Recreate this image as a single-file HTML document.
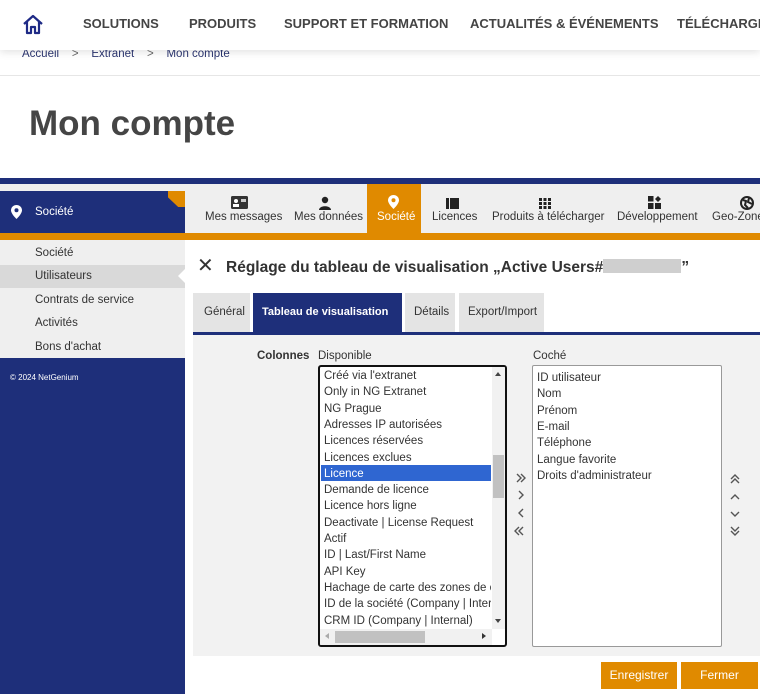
<!DOCTYPE html>
<html><head><meta charset="utf-8"><style>
*{margin:0;padding:0;box-sizing:border-box}
html,body{width:760px;height:694px;overflow:hidden}
body{background:#fff;font-family:"Liberation Sans","DejaVu Sans",sans-serif;position:relative;color:#333}
.a{position:absolute;white-space:nowrap}
.nav{font-size:13px;font-weight:bold;color:#444;top:16px}
.t{font-size:11.5px;color:#333}
.li{position:absolute;left:4px;font-size:11.5px;color:#333;height:16.3px;line-height:16px;white-space:nowrap}
#wrap{position:absolute;left:0;top:0;width:760px;height:694px;overflow:hidden}
</style></head><body><div id="wrap">
<div class="a" style="left:0;top:0;width:760px;height:50px;background:#fff;box-shadow:0 2px 8px rgba(0,0,0,.12);z-index:2"></div>
<svg class="a" style="left:22px;top:13px;z-index:3" width="22" height="22" viewBox="0 0 22 22"><path d="M2 11 L11 3 L20 11 M5 9 V20 H9 V14 H13 V20 H17 V9" fill="none" stroke="#1e2a86" stroke-width="2.2" stroke-linejoin="round"/></svg>
<div class="a nav" style="left:83px;z-index:3">SOLUTIONS</div>
<div class="a nav" style="left:189px;z-index:3">PRODUITS</div>
<div class="a nav" style="left:284px;z-index:3">SUPPORT ET FORMATION</div>
<div class="a nav" style="left:470px;z-index:3">ACTUALITÉS &amp; ÉVÉNEMENTS</div>
<div class="a nav" style="left:677px;z-index:3">TÉLÉCHARGEMENTS</div>
<div class="a" style="left:22px;top:48px;font-size:11.5px;color:#2b3570">Accueil &nbsp;&nbsp; <span style="color:#666">&gt;</span> &nbsp;&nbsp; Extranet &nbsp;&nbsp; <span style="color:#666">&gt;</span> &nbsp;&nbsp; Mon compte</div>
<div class="a" style="left:0;top:75px;width:760px;height:1px;background:#e6e6e6"></div>
<div class="a" style="left:29px;top:104px;font-size:35px;font-weight:bold;color:#454545">Mon compte</div>

<div class="a" style="left:0;top:178px;width:760px;height:6px;background:#1e2f7a"></div>
<div class="a" style="left:0;top:184px;width:760px;height:49px;background:#efefef"></div>
<div class="a" style="left:0;top:191px;width:185px;height:42px;background:#1e2f7a"></div>
<div class="a" style="left:168px;top:191px;width:17px;height:16px;background:#e08a00;clip-path:polygon(0 0,100% 0,100% 100%,60% 100%,0 40%)"></div>
<svg class="a" style="left:11px;top:205px" width="11" height="14" viewBox="0 0 11 14"><path d="M5.5 0C2.5 0 0 2.3 0 5.3 0 9 5.5 14 5.5 14S11 9 11 5.3C11 2.3 8.5 0 5.5 0z" fill="#fff"/><circle cx="5.5" cy="5.3" r="2" fill="#1e2f7a"/></svg>
<div class="a" style="left:35px;top:206px;font-size:11.5px;color:#fff">Société</div>
<div class="a" style="left:0;top:233px;width:760px;height:7px;background:#e08a00"></div>
<!-- top tabs -->
<svg class="a" style="left:231px;top:196px" width="17" height="13"><rect width="17" height="13" rx="1.5" fill="#333"/><circle cx="5" cy="5" r="2" fill="#fff"/><rect x="2" y="8" width="6" height="3" fill="#fff"/><rect x="10" y="3" width="5" height="3" fill="#ccc"/></svg>
<div class="a t" style="left:205px;top:211px">Mes messages</div>
<svg class="a" style="left:318px;top:196px" width="14" height="14"><circle cx="7" cy="4" r="3.2" fill="#222"/><path d="M1 14C1 9 13 9 13 14z" fill="#222"/></svg>
<div class="a t" style="left:294px;top:211px">Mes données</div>
<div class="a" style="left:367px;top:184px;width:54px;height:49px;background:#e08a00"></div>
<svg class="a" style="left:388px;top:195px" width="11" height="14" viewBox="0 0 11 14"><path d="M5.5 0C2.5 0 0 2.3 0 5.3 0 9 5.5 14 5.5 14S11 9 11 5.3C11 2.3 8.5 0 5.5 0z" fill="#fff"/><circle cx="5.5" cy="5.3" r="2" fill="#e08a00"/></svg>
<div class="a t" style="left:377px;top:211px;color:#fff">Société</div>
<svg class="a" style="left:446px;top:198px" width="13" height="11"><rect width="3" height="11" fill="#222"/><rect x="4" width="9" height="11" fill="#222"/></svg>
<div class="a t" style="left:432px;top:211px">Licences</div>
<svg class="a" style="left:539px;top:198px" width="12" height="11"><g fill="#222"><rect width="3" height="3"/><rect x="4.5" width="3" height="3"/><rect x="9" width="3" height="3"/><rect y="4" width="3" height="3"/><rect x="4.5" y="4" width="3" height="3"/><rect x="9" y="4" width="3" height="3"/><rect y="8" width="3" height="3"/><rect x="4.5" y="8" width="3" height="3"/><rect x="9" y="8" width="3" height="3"/></g></svg>
<div class="a t" style="left:492px;top:211px">Produits à télécharger</div>
<svg class="a" style="left:648px;top:196px" width="13" height="13"><g fill="#222"><rect width="5.5" height="5.5"/><rect y="7" width="5.5" height="6"/><rect x="7" y="7" width="6" height="6"/><path d="M10 0 13 3 10 6 7 3z"/></g></svg>
<div class="a t" style="left:617px;top:211px">Développement</div>
<svg class="a" style="left:740px;top:196px" width="14" height="14"><circle cx="7" cy="7" r="6" fill="none" stroke="#222" stroke-width="2"/><path d="M3 4 6 5 5 9 8 12M9 2 8 6 12 8" stroke="#222" stroke-width="2" fill="none"/></svg>
<div class="a t" style="left:712px;top:211px">Geo-Zone</div>

<!-- sidebar -->
<div class="a" style="left:0;top:240px;width:185px;height:118px;background:#efefef"></div>
<div class="a" style="left:0;top:265px;width:185px;height:23px;background:#d9d9d9"></div>
<div class="a" style="left:178px;top:269px;width:0;height:0;border-top:7px solid transparent;border-bottom:7px solid transparent;border-right:7px solid #fff"></div>
<div class="a t" style="left:35px;top:247px">Société</div>
<div class="a t" style="left:35px;top:270px">Utilisateurs</div>
<div class="a t" style="left:35px;top:294px">Contrats de service</div>
<div class="a t" style="left:35px;top:317px">Activités</div>
<div class="a t" style="left:35px;top:341px">Bons d'achat</div>
<div class="a" style="left:0;top:358px;width:185px;height:336px;background:#1e2f7a"></div>
<div class="a" style="left:10px;top:373px;font-size:8px;color:#fff">© 2024 NetGenium</div>

<!-- title -->
<div class="a" style="left:197px;top:256px;font-size:20px;color:#333;line-height:20px">✕</div>
<div class="a" style="left:226px;top:259px;font-size:15.5px;font-weight:bold;color:#333">Réglage du tableau de visualisation „Active Users#<span style="display:inline-block;width:78px;height:14px;background:#cfcfcf;vertical-align:-1px"></span>”</div>
<!-- tabs -->
<div class="a" style="left:193px;top:293px;width:57px;height:39px;background:#e4e4e4"></div>
<div class="a t" style="left:204px;top:306px">Général</div>
<div class="a" style="left:253px;top:293px;width:149px;height:39px;background:#1e2f7a"></div>
<div class="a t" style="left:262px;top:306px;color:#fff;font-weight:bold;font-size:11px">Tableau de visualisation</div>
<div class="a" style="left:405px;top:293px;width:50px;height:39px;background:#e4e4e4"></div>
<div class="a t" style="left:414px;top:306px">Détails</div>
<div class="a" style="left:459px;top:293px;width:85px;height:39px;background:#e4e4e4"></div>
<div class="a t" style="left:468px;top:306px">Export/Import</div>
<div class="a" style="left:193px;top:332px;width:567px;height:3px;background:#1e2f7a"></div>
<div class="a" style="left:193px;top:335px;width:567px;height:321px;background:#f2f2f2"></div>
<div class="a t" style="left:257px;top:350px;font-weight:bold">Colonnes</div>
<div class="a t" style="left:318px;top:350px">Disponible</div>
<div class="a t" style="left:533px;top:350px">Coché</div>
<!-- available list -->
<div class="a" style="left:318px;top:365px;width:189px;height:282px;border:2px solid #111;border-radius:3px;background:#fff;overflow:hidden">
 <div class="li" style="top:1px">Créé via l'extranet</div>
 <div class="li" style="top:17.3px">Only in NG Extranet</div>
 <div class="li" style="top:33.6px">NG Prague</div>
 <div class="li" style="top:49.9px">Adresses IP autorisées</div>
 <div class="li" style="top:66.2px">Licences réservées</div>
 <div class="li" style="top:82.5px">Licences exclues</div>
 <div style="position:absolute;left:1px;top:98px;width:170px;height:16px;background:#2f66d1"></div>
 <div class="li" style="top:98.8px;color:#fff">Licence</div>
 <div class="li" style="top:115.1px">Demande de licence</div>
 <div class="li" style="top:131.4px">Licence hors ligne</div>
 <div class="li" style="top:147.7px">Deactivate | License Request</div>
 <div class="li" style="top:164px">Actif</div>
 <div class="li" style="top:180.3px">ID | Last/First Name</div>
 <div class="li" style="top:196.6px">API Key</div>
 <div class="li" style="top:212.9px;width:167px;overflow:hidden">Hachage de carte des zones de chalandise</div>
 <div class="li" style="top:229.2px;width:167px;overflow:hidden">ID de la société (Company | Internal)</div>
 <div class="li" style="top:245.5px">CRM ID (Company | Internal)</div>
 <div style="position:absolute;left:172px;top:0;width:13px;height:262px;background:#f1f1f1"></div>
 <div style="position:absolute;left:173px;top:88px;width:11px;height:43px;background:#c1c1c1"></div>
 <div style="position:absolute;left:175px;top:5px;border-left:3.5px solid transparent;border-right:3.5px solid transparent;border-bottom:4px solid #444"></div>
 <div style="position:absolute;left:175px;top:252px;border-left:3.5px solid transparent;border-right:3.5px solid transparent;border-top:4px solid #444"></div>
 <div style="position:absolute;left:0;top:262px;width:172px;height:16px;background:#f1f1f1"></div>
 <div style="position:absolute;left:15px;top:264px;width:90px;height:12px;background:#c1c1c1"></div>
 <div style="position:absolute;left:5px;top:266px;border-top:3.5px solid transparent;border-bottom:3.5px solid transparent;border-right:4px solid #aaa"></div>
 <div style="position:absolute;left:162px;top:266px;border-top:3.5px solid transparent;border-bottom:3.5px solid transparent;border-left:4px solid #333"></div>
</div>
<!-- mid arrows -->
<svg class="a" style="left:514px;top:472px" width="12" height="66" viewBox="0 0 12 66" fill="none" stroke="#555" stroke-width="1.4"><path d="M3 2 7 6 3 10M7 2 11 6 7 10M5 19 9 23 5 27M9 37 5 41 9 45M5 55 1 59 5 63M9 55 5 59 9 63"/></svg>
<!-- chosen list -->
<div class="a" style="left:532px;top:365px;width:190px;height:282px;border:1px solid #999;border-radius:2px;background:#fff">
 <div class="li" style="top:4px">ID utilisateur</div>
 <div class="li" style="top:20.3px">Nom</div>
 <div class="li" style="top:36.6px">Prénom</div>
 <div class="li" style="top:52.9px">E-mail</div>
 <div class="li" style="top:69.2px">Téléphone</div>
 <div class="li" style="top:85.5px">Langue favorite</div>
 <div class="li" style="top:101.8px">Droits d'administrateur</div>
</div>
<svg class="a" style="left:729px;top:472px" width="12" height="66" viewBox="0 0 12 66" fill="none" stroke="#555" stroke-width="1.4"><path d="M2 7 6 3 10 7M2 11 6 7 10 11M2 27 6 23 10 27M2 40 6 44 10 40M2 55 6 59 10 55M2 59 6 63 10 59"/></svg>
<!-- buttons -->
<div class="a" style="left:601px;top:662px;width:76px;height:27px;background:#e08a00;color:#fff;font-size:12px;text-align:center;line-height:27px">Enregistrer</div>
<div class="a" style="left:681px;top:662px;width:77px;height:27px;background:#e08a00;color:#fff;font-size:12px;text-align:center;line-height:27px">Fermer</div>
</div></body></html>
